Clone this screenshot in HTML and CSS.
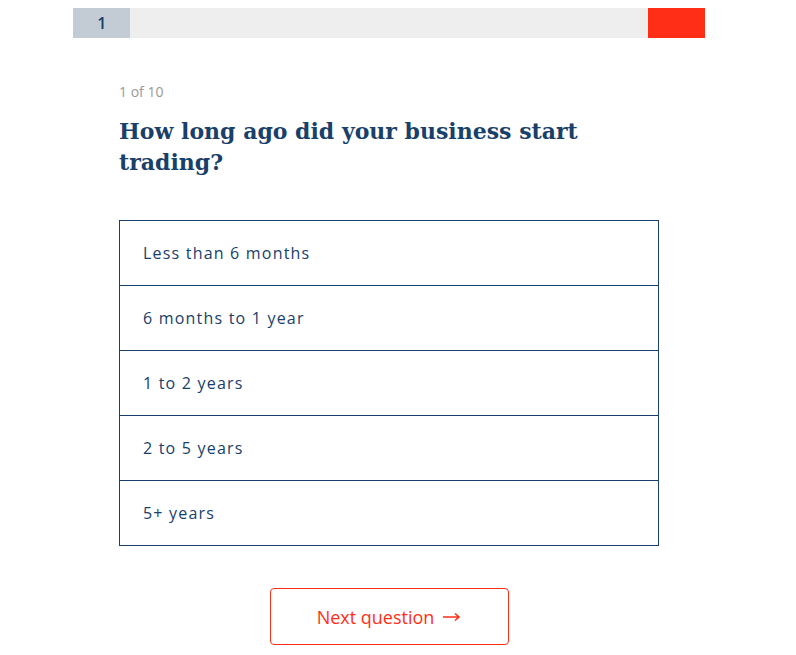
FILE: index.html
```html
<!DOCTYPE html>
<html lang="en">
<head>
  <meta charset="UTF-8" />
  <meta name="viewport" content="width=device-width, initial-scale=1.0"/>
  <title>Business quiz</title>
  <link rel="stylesheet" href="styles.css">
</head>
<body>
  <div class="wrap">
    <div class="progress">
      <div class="step current">1</div>
      <div class="step"></div>
      <div class="step"></div>
      <div class="step"></div>
      <div class="step"></div>
      <div class="step"></div>
      <div class="step"></div>
      <div class="step"></div>
      <div class="step"></div>
      <div class="step"></div>
      <div class="step finish"></div>
    </div>

    <div class="question">
      <p class="count">1 of 10</p>
      <h1>How long ago did your business start trading?</h1>

      <ul class="options">
        <li>Less than 6 months</li>
        <li>6 months to 1 year</li>
        <li>1 to 2 years</li>
        <li>2 to 5 years</li>
        <li>5+ years</li>
      </ul>

      <div class="actions">
        <button class="btn-next" type="button">
          Next question
          <svg class="arrow" width="18" height="10" viewBox="0 0 18 10" aria-hidden="true">
            <path d="M0 5h16M12 1.5l4 3.5-4 3.5" fill="none" stroke="currentColor" stroke-width="1.6"/>
          </svg>
        </button>
      </div>
    </div>
  </div>
</body>
</html>
```

FILE: styles.css
```css
:root {
  --navy: #19406a;
  --red: #ff2f17;
  --track: #eeeeee;
}

* {
  box-sizing: border-box;
}

body {
  margin: 0;
  font-family: 'Open Sans', sans-serif;
  color: var(--navy);
  background: #fff;
}

.wrap {
  width: 632px;
  margin-left: 73px;
  padding-top: 8px;
}

.progress {
  display: flex;
  height: 30px;
  background: var(--track);
}

.step {
  flex: 1;
  display: flex;
  align-items: center;
  justify-content: center;
  font-size: 16px;
  font-weight: 600;
}

.step.current {
  background: #c3ccd5;
}

.step.finish {
  background: var(--red);
}

.question {
  padding: 0 46px;
}

.count {
  margin: 44px 0 0;
  font-size: 14px;
  line-height: 19px;
  color: #999;
}

h1 {
  margin: 15px 0 0;
  font-family: 'DejaVu Serif', serif;
  font-size: 22px;
  line-height: 31px;
  font-weight: bold;
  color: var(--navy);
}

.options {
  list-style: none;
  margin: 42px 0 0;
  padding: 0;
  border: 1px solid var(--navy);
}

.options li {
  height: 65px;
  display: flex;
  align-items: center;
  padding-left: 23px;
  font-size: 16px;
  letter-spacing: 1.2px;
  border-top: 1px solid var(--navy);
}

.options li:first-child {
  height: 64px;
  border-top: none;
}

.actions {
  display: flex;
  justify-content: center;
  margin-top: 42px;
}

.btn-next {
  display: flex;
  align-items: center;
  justify-content: center;
  gap: 9px;
  width: 239px;
  height: 57px;
  background: #fff;
  border: 1px solid var(--red);
  border-radius: 4px;
  color: var(--red);
  font-family: 'Open Sans', sans-serif;
  font-size: 18px;
  cursor: pointer;
}

.arrow {
  margin-top: 1px;
}
```
